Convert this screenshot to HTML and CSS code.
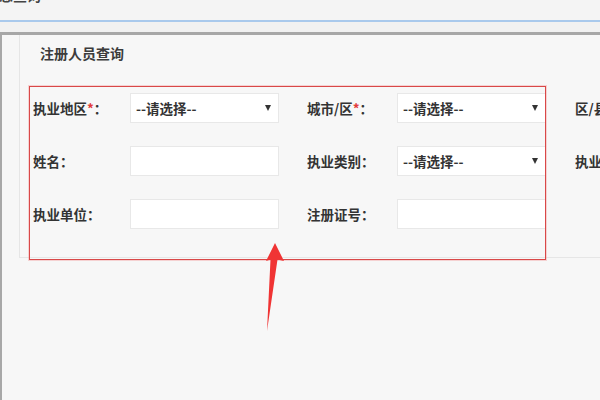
FILE: index.html
```html
<!DOCTYPE html>
<html lang="zh-CN">
<head>
<meta charset="utf-8">
<title>注册人员查询</title>
<link rel="stylesheet" href="styles.css">
</head>
<body>
  <div class="topbar"><span class="toptitle">信息查询</span></div>
  <div class="band"></div>
  <div class="main">
    <div class="panel">
      <h2 class="title">注册人员查询</h2>
      <div class="form">
        <label class="lbl">执业地区<span class="req">*</span>：</label>
        <div class="field select"><span>--请选择--</span><i class="caret"></i></div>
        <label class="lbl">城市/区<span class="req">*</span>：</label>
        <div class="field select wide"><span>--请选择--</span><i class="caret"></i></div>
        <label class="lbl">区/县<span class="req">*</span>：</label>

        <label class="lbl">姓名：</label>
        <div class="field"></div>
        <label class="lbl">执业类别：</label>
        <div class="field select wide"><span>--请选择--</span><i class="caret"></i></div>
        <label class="lbl">执业资格：</label>

        <label class="lbl">执业单位：</label>
        <div class="field"></div>
        <label class="lbl">注册证号：</label>
        <div class="field wide"></div>
        <span></span>
      </div>
    </div>
  </div>

  <div class="annot-rect"></div>
  <svg class="annot-arrow" width="600" height="400" viewBox="0 0 600 400">
    <polygon points="275,243 284,261 277.5,259.5 267,331 270.5,259.5 266,261" fill="#f03434"/>
  </svg>
</body>
</html>
```

FILE: styles.css
```css
* { box-sizing: border-box; }

html, body {
  margin: 0;
  padding: 0;
}

body {
  width: 600px;
  height: 400px;
  overflow: hidden;
  position: relative;
  background: #f7f7f7;
  font-family: "Noto Sans CJK SC", "Microsoft YaHei", "Noto Sans", sans-serif;
  color: #333;
}

.topbar {
  height: 22px;
  background: #f4f4f4;
  border-bottom: 2px solid #a9c9ec;
  overflow: hidden;
  position: relative;
}

.toptitle {
  display: block;
  margin-top: -13px;
  margin-left: -15px;
  font-size: 14px;
  line-height: 16px;
  color: #444;
  font-weight: bold;
}

.band {
  height: 13px;
  background: #f1f1f1;
  border-bottom: 3px solid #a7a7a7;
}

.main {
  height: 366px;
  border-left: 2px solid #a8a8a8;
  padding-left: 17px;
  background: #f7f7f7;
}

.panel {
  height: 223px;
  border-left: 1px solid #e6e6e6;
  border-bottom: 1px solid #e6e6e6;
  padding: 8px 0 0 20px;
}

.title {
  margin: 0;
  font-size: 14px;
  line-height: 20px;
  font-weight: bold;
  color: #3c3c3c;
}

.form {
  margin-top: 30px;
  margin-left: -7px;
  display: grid;
  grid-template-columns: 97px 177px 90px 178px 1fr;
  grid-auto-rows: 30px;
  row-gap: 23px;
  align-items: center;
}

.lbl {
  font-size: 13.5px;
  font-weight: bold;
  color: #333;
  white-space: nowrap;
  overflow: hidden;
}

.req {
  color: #e23a3a;
}

.field {
  width: 149px;
  height: 30px;
  background: #fff;
  border: 1px solid #e8e8e8;
  display: flex;
  align-items: center;
  padding: 0 6px 0 5px;
}

.field.wide {
  width: 149px;
}

.select span {
  flex: 1;
  font-size: 13.5px;
  font-weight: bold;
  color: #333;
  white-space: nowrap;
}

.caret {
  width: 0;
  height: 0;
  border-left: 3px solid transparent;
  border-right: 3px solid transparent;
  border-top: 6px solid #333;
  margin-right: 1px;
}

.annot-rect {
  position: absolute;
  left: 29px;
  top: 86px;
  width: 517px;
  height: 174px;
  border: 1px solid #d94848;
  box-shadow: 0 0 0 1px rgba(240, 140, 140, 0.35);
  pointer-events: none;
}

.annot-arrow {
  position: absolute;
  left: 0;
  top: 0;
  pointer-events: none;
}
```
